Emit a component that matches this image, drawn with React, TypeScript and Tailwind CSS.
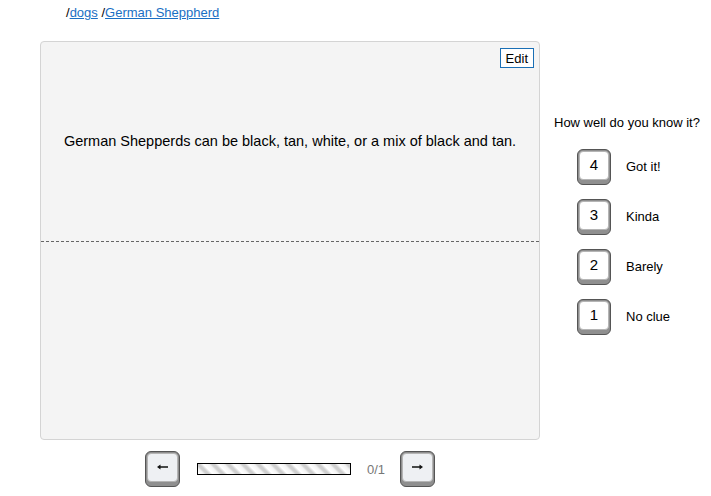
import React from "react";

function Key({ children, w = "w-[34px]", inner = "bg-white" }: { children: React.ReactNode; w?: string; inner?: string }) {
  return (
    <div className={`${w} h-[36px] rounded-[6px] border border-[#555] bg-[#8f8f8f] p-[1px] pb-[4px] flex`}>
      <div className={`flex-1 rounded-[4px] border border-[#b5b5b5] ${inner} flex items-center justify-center text-[15px] text-black leading-none pb-[2px]`}>
        {children}
      </div>
    </div>
  );
}

const ratings = [
  { n: "4", label: "Got it!" },
  { n: "3", label: "Kinda" },
  { n: "2", label: "Barely" },
  { n: "1", label: "No clue" },
];

export default function App() {
  return (
    <div className="w-[711px] h-[496px] bg-white font-['Liberation_Sans',Arial,sans-serif] text-black overflow-hidden">
      <div className="pl-[66px] pt-[5px] h-[41px] text-[13px] leading-[15px]">
        <span>/</span>
        <a className="text-[#1a6fc4] underline" href="#">dogs</a>
        <span> /</span>
        <a className="text-[#1a6fc4] underline" href="#">German Sheppherd</a>
      </div>
      <div className="flex">
        <div className="ml-[40px] w-[500px] flex flex-col">
          <div className="h-[399px] rounded-[4px] border border-[#d4d4d4] bg-[#f4f4f4] flex flex-col">
            <div className="relative h-[199px] flex items-center justify-center text-[14.5px]">
              <button className="absolute right-[5px] top-[6px] h-[20px] px-[5px] bg-white border border-[#1a6fb5] text-[13px] leading-none text-black">
                Edit
              </button>
              <span>German Shepperds can be black, tan, white, or a mix of black and tan.</span>
            </div>
            <div className="border-t border-dashed border-[#666]" />
            <div className="flex-1" />
          </div>
          <div className="mt-[11px] flex items-center justify-center">
            <Key w="w-[35px]" inner="bg-[#eef0f3]">
              <svg width="11" height="6" viewBox="0 0 11 6"><path d="M0 3 L3.5 0.5 L3.5 2.3 L11 2.3 L11 3.7 L3.5 3.7 L3.5 5.5 Z" fill="#111" /></svg>
            </Key>
            <div className="ml-[17px] w-[154px] h-[12px] border border-black bg-[repeating-linear-gradient(45deg,#ffffff_0px,#f4f4f4_4px,#cfcfcf_6px,#cfcfcf_8px,#f4f4f4_10px,#ffffff_10.6px)]" />
            <span className="ml-[16px] text-[13px] text-[#777] pt-[2px]">0/1</span>
            <div className="ml-[15px]">
              <Key w="w-[35px]" inner="bg-[#eef0f3]">
                <svg width="11" height="6" viewBox="0 0 11 6"><path d="M11 3 L7.5 0.5 L7.5 2.3 L0 2.3 L0 3.7 L7.5 3.7 L7.5 5.5 Z" fill="#111" /></svg>
              </Key>
            </div>
          </div>
        </div>
        <div className="ml-[14px] pt-[74px]">
          <div className="text-[13px] leading-[15px]">How well do you know it?</div>
          <div className="mt-[19px] ml-[23px] flex flex-col gap-[14px]">
            {ratings.map((r) => (
              <div key={r.n} className="flex items-center">
                <Key>{r.n}</Key>
                <span className="ml-[15px] text-[13px] pb-[1px]">{r.label}</span>
              </div>
            ))}
          </div>
        </div>
      </div>
    </div>
  );
}
